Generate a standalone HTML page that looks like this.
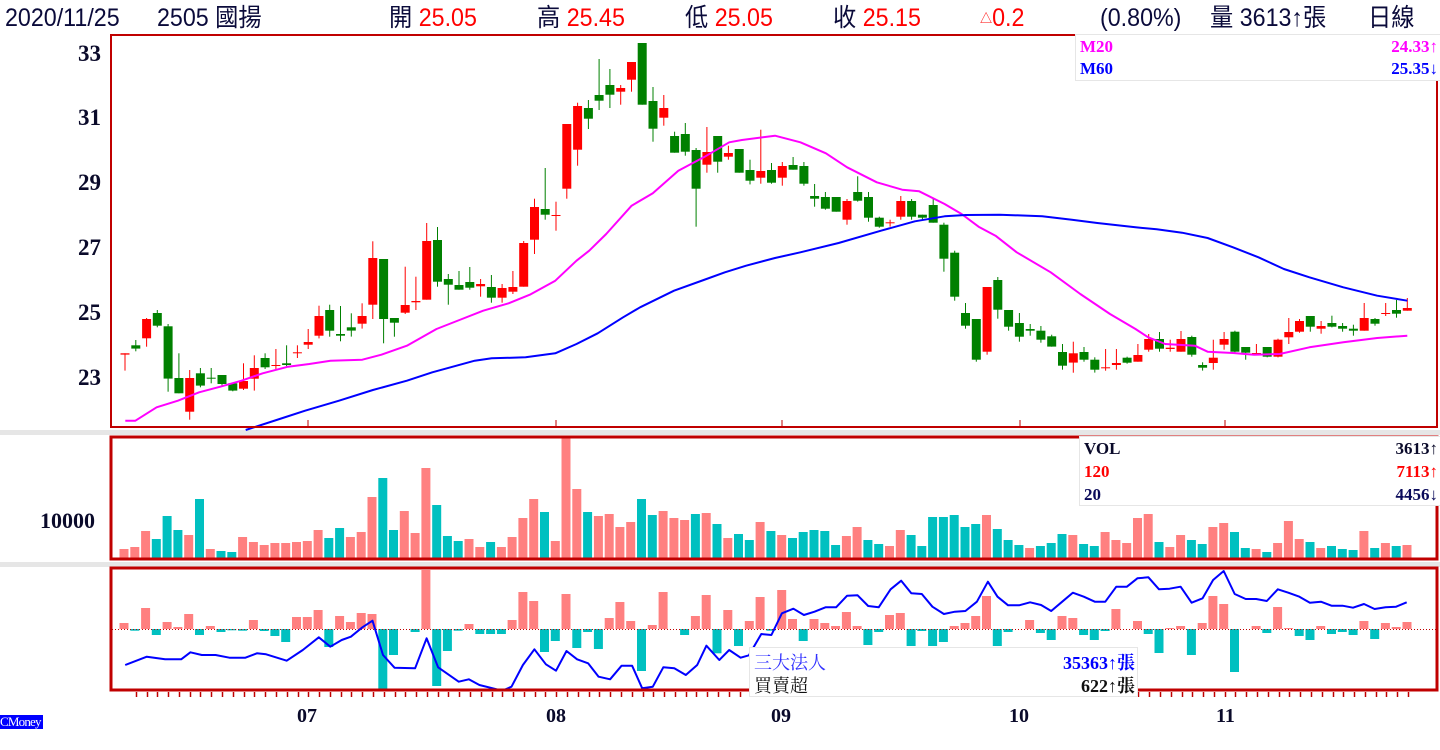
<!DOCTYPE html>
<html><head><meta charset="utf-8">
<style>
html,body{margin:0;padding:0;background:#fff;width:1440px;height:750px;overflow:hidden;position:relative}
.h{position:absolute;top:3px;font-family:"Liberation Sans","Noto Sans CJK TC",sans-serif;font-size:25px;color:#0a0a3a;white-space:nowrap;transform:scaleX(0.93);transform-origin:left top;line-height:30px}
.r{color:#ff0000}
.ax{position:absolute;font-family:"Liberation Serif",serif;font-weight:bold;color:#0a0a2a;white-space:nowrap}
.lg{position:absolute;background:#fff;border:1px solid #e6e6e6;font-family:"Liberation Serif","Noto Serif CJK SC",serif;font-weight:bold;font-size:17px}
.lg div{position:absolute;white-space:nowrap}
</style></head><body>
<div class="h" style="left:5px">2020/11/25</div>
<div class="h" style="left:157px">2505 國揚</div>
<div class="h" style="left:389px">開 <span class="r">25.05</span></div>
<div class="h" style="left:537px">高 <span class="r">25.45</span></div>
<div class="h" style="left:685px">低 <span class="r">25.05</span></div>
<div class="h" style="left:833px">收 <span class="r">25.15</span></div>
<div class="h" style="left:980px"><span class="r"><span style="font-size:13px;vertical-align:3px">△</span>0.2</span></div>
<div class="h" style="left:1100px">(0.80%)</div>
<div class="h" style="left:1210px">量 3613↑張</div>
<div class="h" style="left:1368px">日線</div>

<svg id="c" width="1440" height="750" style="position:absolute;left:0;top:0"></svg>

<div class="ax" style="left:78px;top:41px;font-size:23px">33</div>
<div class="ax" style="left:78px;top:105px;font-size:23px">31</div>
<div class="ax" style="left:78px;top:170px;font-size:23px">29</div>
<div class="ax" style="left:78px;top:235px;font-size:23px">27</div>
<div class="ax" style="left:78px;top:300px;font-size:23px">25</div>
<div class="ax" style="left:78px;top:365px;font-size:23px">23</div>
<div class="ax" style="left:40px;top:508px;font-size:22px">10000</div>
<div class="ax" style="left:297px;top:705px;font-size:20px">07</div>
<div class="ax" style="left:546px;top:705px;font-size:20px">08</div>
<div class="ax" style="left:771px;top:705px;font-size:20px">09</div>
<div class="ax" style="left:1009px;top:705px;font-size:20px">10</div>
<div class="ax" style="left:1216px;top:705px;font-size:20px">11</div>
<div style="position:absolute;left:0;top:715px;width:43px;height:14px;background:#0000ff;color:#fff;font-family:'Liberation Serif',serif;font-size:13px;line-height:14px;letter-spacing:-0.8px">CMoney</div>

<div class="lg" style="left:1075px;top:34px;width:364px;height:45px">
<div style="left:4px;top:2px;color:#ff00ff">M20</div><div style="right:2px;top:2px;color:#ff00ff">24.33↑</div>
<div style="left:4px;top:24px;color:#0000ff">M60</div><div style="right:2px;top:24px;color:#0000ff">25.35↓</div>
</div>
<div class="lg" style="left:1079px;top:436px;width:360px;height:68px">
<div style="left:4px;top:2px;color:#0a0a2a">VOL</div><div style="right:2px;top:2px;color:#0a0a2a">3613↑</div>
<div style="left:4px;top:25px;color:#ff0000">120</div><div style="right:2px;top:25px;color:#ff0000">7113↑</div>
<div style="left:4px;top:48px;color:#0a0a5a">20</div><div style="right:2px;top:48px;color:#0a0a5a">4456↓</div>
</div>
<div class="lg" style="left:749px;top:647px;width:387px;height:48px;font-weight:normal;font-size:18px">
<div style="left:4px;top:1px;color:#3030ff">三大法人</div><div style="right:2px;top:1px;color:#0000ff;font-weight:bold">35363↑張</div>
<div style="left:4px;top:24px;color:#111">買賣超</div><div style="right:2px;top:24px;color:#111;font-weight:bold">622↑張</div>
</div>

<script>
var s='';
function R(x,y,w,h,c){s+='<rect x="'+x.toFixed(1)+'" y="'+y.toFixed(1)+'" width="'+w+'" height="'+Math.max(h,1).toFixed(1)+'" fill="'+c+'"/>';}
R(0,430,1440,5,'#e6e6e6');R(0,562,1440,5,'#e6e6e6');
var C=[[958,962,958,1010,1],[934,944,918,952,0],[855,913,852,938,1],[837,875,828,880,0],[877,1034,870,1073,0],[1032,1078,958,1078,0],[1032,1133,1008,1157,1],[1018,1055,1002,1060,0],[1031,1034,1002,1048,0],[1023,1050,1023,1055,0],[1048,1070,1048,1072,0],[1041,1064,988,1068,1],[1002,1034,964,1070,1],[972,1000,958,1005,0],[993,996,945,1005,1],[988,993,934,997,0],[955,956,934,972,1],[924,932,885,945,1],[846,905,815,913,1],[828,890,812,908,0],[900,905,816,922,0],[880,890,838,908,0],[846,869,808,884,1],[672,812,622,855,1],[675,855,675,928,0],[852,866,852,908,0],[813,836,698,840,1],[801,805,728,828,1],[621,797,567,797,1],[618,743,579,758,0],[735,752,720,812,0],[753,767,711,767,0],[744,761,699,767,0],[750,757,735,788,1],[759,791,723,806,0],[762,791,750,806,1],[759,773,711,780,1],[627,758,621,758,1],[519,617,494,660,1],[525,542,402,557,0],[543,545,503,590,1],[270,464,270,494,1],[216,347,206,395,1],[222,254,198,285,0],[183,200,75,228,0],[153,182,105,222,0],[162,173,153,212,1],[84,137,84,173,1],[27,212,27,212,0],[201,284,159,323,0],[222,251,183,275,1],[306,356,293,356,0],[300,353,267,365,0],[348,464,342,578,0],[354,392,279,416,1],[306,383,306,416,0],[357,368,335,377,1],[345,416,345,416,0],[408,440,377,451,0],[411,431,287,449,1],[408,446,387,449,0],
[396,431,384,455,1],[393,407,369,407,0],[396,449,384,455,0],[486,494,450,518,0],[489,524,474,527,0],[489,533,489,533,0],[501,557,495,572,1],[474,500,427,503,0],[489,551,474,563,0],[551,578,548,581,0],[565,567,557,578,1],[501,548,486,557,1],[501,548,495,557,0],[542,551,542,557,0],[513,566,492,566,0],[572,674,566,713,0],[656,788,650,800,0],[837,875,807,884,0],[855,977,855,983,0],[759,953,759,962,1],[738,827,729,854,0],[828,878,828,890,0],[867,908,837,923,0],[885,890,870,905,0],[890,917,876,926,0],[907,938,902,938,0],[954,995,930,1007,0],[958,986,923,1016,1],[954,977,939,983,0],[977,1007,970,1016,0],[1000,1003,945,1010,1],[987,993,945,1007,1],[971,986,968,989,0],[963,983,930,983,1],[915,947,900,953,1],[915,944,894,953,0],[941,945,917,953,1],[915,953,891,953,1],[909,962,905,968,0],[993,1001,985,1010,0],[971,987,917,1007,1],[915,932,894,947,1],[893,953,890,956,0],[939,956,939,977,0],[957,961,930,962,1],[939,968,939,970,0],[917,968,914,970,1],[894,910,852,930,1],[861,893,855,896,1],[846,878,846,893,0],[876,884,861,899,1],[867,878,845,880,0],[876,884,867,893,0],[884,890,872,905,0],[852,890,807,890,1],[855,869,852,875,0],[837,840,807,846,1],[828,839,798,851,0],[822,830,792,830,1]];
var N=C.length;
function cx(i){return 125+i*(1407.3-125)/(N-1);}
for(var i=0;i<N;i++){var c=C[i],x=cx(i),col=c[4]?'#ff0000':'#008000';
R(x-0.5,34+c[2]/3,1,(c[3]-c[2])/3,col);R(x-4.5,34+c[0]/3,9,(c[1]-c[0])/3,col);}
function line(pts,col,w){s+='<polyline fill="none" stroke="'+col+'" stroke-width="'+w+'" stroke-linejoin="round" points="'+pts.map(function(p){return p[0].toFixed(1)+','+p[1].toFixed(1)}).join(' ')+'"/>';}
function z5(a){return a.map(function(p){return[110+p[0]/2.358,34+p[1]/3]});}
function z6(a){return a.map(function(p){return[775+p[0]/2.358,34+p[1]/3]});}
var m20=z5([[36,1160],[60,1160],[110,1120],[160,1100],[210,1075],[260,1058],[310,1040],[360,1018],[420,998],[470,990],[520,980],[595,977],[640,962],[700,935],[770,885],[830,855],[880,830],[940,808],[990,782],[1050,740],[1100,680],[1130,650],[1170,600],[1230,515],[1280,478],[1340,410],[1400,370],[1460,325],[1490,318],[1568,305]]).concat(z6([[60,325],[120,358],[170,400],[240,445],[300,467],[340,472],[400,510],[440,540],[480,578],[520,605],[570,655],[650,715],[720,780],[790,840],[850,885],[880,910],[920,930],[990,935],[1020,953],[1080,957],[1130,962],[1190,960],[1260,940],[1340,925],[1420,912],[1491,905]]));
var m60=z5([[320,1188],[400,1155],[460,1130],[540,1100],[620,1068],[700,1040],[760,1015],[860,980],[900,973],[980,970],[1050,958],[1100,930],[1150,898],[1210,850],[1250,820],[1330,770],[1400,738],[1450,715],[1500,695],[1568,672]]).concat(z6([[60,655],[150,627],[250,590],[330,562],[400,547],[450,543],[530,542],[630,547],[700,557],[760,567],[850,580],[900,586],[960,596],[1020,612],[1080,640],[1140,670],[1200,705],[1260,730],[1340,760],[1420,785],[1491,800]]));
line(m20,'#ff00ff',2);line(m60,'#0000ff',2);
var V=[[387,1],[381,1],[333,1],[357,0],[288,0],[330,0],[345,1],[237,0],[387,1],[393,0],[396,0],[351,1],[366,1],[375,1],[369,1],[369,1],[366,1],[363,1],[330,1],[354,0],[324,0],[351,1],[336,1],[231,1],[174,0],[330,0],[273,1],[339,1],[144,1],[255,0],[348,0],[363,0],[357,1],[381,1],[366,0],[381,1],[351,1],[294,1],[237,1],[276,0],[363,1],[54,1],[207,1],[276,0],[288,1],[282,1],[321,1],[306,1],[237,0],[285,0],[273,1],[294,1],[300,1],[282,0],[279,1],[312,0],
[354,1],[342,0],[360,0],[306,1],[333,0],[345,1],[354,0],[336,0],[330,0],[333,0],[375,0],[348,1],[321,1],[360,0],[372,0],[378,1],[330,1],[345,0],[378,0],[291,0],[291,0],[285,0],[321,0],[312,0],[285,1],[327,0],[360,0],[375,0],[384,1],[378,0],[369,0],[342,0],[345,1],[372,0],[378,0],[336,1],[360,1],[369,1],[294,1],[282,1],[366,0],[381,1],[345,1],[360,0],[372,0],[321,1],[309,1],[336,0],[384,0],[387,1],[396,0],[369,1],[303,1],[357,1],[366,0],[384,1],[378,0],[387,0],[390,0],[333,1],[384,0],[369,1],[378,0],[375,1]];
var M=V.length;function vx(i){return 124+i*(1407-124)/(M-1);}
for(var i=0;i<M;i++){var t=420+V[i][0]/3;R(vx(i)-4.5,t,9,558-t,V[i][1]?'#ff8080':'#00c0c0');}
var B=[609,632,564,645,606,621,582,645,618,636,631,632,600,633,648,666,591,591,570,681,588,606,579,582,815,705,628,636,450,798,693,632,612,642,642,642,600,516,543,696,663,522,684,636,687,594,546,603,753,615,516,628,645,588,525,700,
570,678,603,531,632,510,597,663,597,609,618,576,618,675,636,585,579,678,633,678,666,618,609,588,528,678,636,627,600,639,660,588,594,645,660,633,567,627,603,642,699,624,618,705,609,528,552,756,627,618,639,561,624,648,660,618,642,636,645,603,657,609,621,606];
for(var i=0;i<B.length&&i<M;i++){var y=420+B[i]/3,b=629;if(Math.abs(y-b)<0.5)continue;
if(y<b)R(vx(i)-4.5,y,9,b-y,'#ff8080');else R(vx(i)-4.5,b,9,Math.min(y,691)-b,'#00c0c0');}
s+='<line x1="112" y1="629.5" x2="1437" y2="629.5" stroke="#c00000" stroke-width="1" stroke-dasharray="1,2"/>';
function z3(a){return a.map(function(p){return[p[0]/2.18,420+p[1]/3]});}
function z4(a){return a.map(function(p){return[720+p[0]/2.18,420+p[1]/3]});}
var bl=z3([[273,735],[320,710],[360,718],[395,718],[415,697],[440,705],[470,705],[500,713],[535,713],[560,700],[580,703],[625,722],[660,690],[695,652],[720,680],[745,660],[765,650],[790,622],[812,602],[835,705],[860,743],[905,745],[930,655],[955,742],[1000,785],[1022,778],[1045,795],[1095,812],[1115,800],[1140,735],[1165,688],[1190,733],[1212,752],[1235,693],[1258,718],[1282,730],[1305,770],[1330,778],[1355,737],[1378,737],[1400,805],[1423,800],[1446,742],[1470,745],[1495,765],[1520,735],[1540,677],[1568,720]]).concat(z4([[0,718],[20,690],[45,713],[63,706],[90,642],[112,645],[135,580],[160,566],[183,585],[206,575],[230,562],[253,562],[277,527],[300,526],[323,558],[346,562],[372,508],[395,482],[417,520],[440,522],[463,560],[488,582],[512,575],[535,573],[560,545],[584,485],[605,530],[628,556],[652,556],[676,547],[700,555],[722,573],[746,545],[769,518],[793,530],[817,545],[840,545],[864,500],[887,500],[910,475],[934,472],[957,508],[980,506],[1004,500],[1028,548],[1052,535],[1075,480],[1098,453],[1122,522],[1146,537],[1169,537],[1192,543],[1216,508],[1239,518],[1263,530],[1286,548],[1310,545],[1333,557],[1357,557],[1380,563],[1404,552],[1427,567],[1451,562],[1474,560],[1497,547]]));
line(bl,'#0000ff',2);
var rc='#c00000';
s+='<rect x="111" y="35" width="1326" height="392" fill="none" stroke="'+rc+'" stroke-width="2"/>';
s+='<rect x="111" y="437" width="1326" height="122" fill="none" stroke="'+rc+'" stroke-width="3"/>';
s+='<rect x="111" y="568" width="1326" height="122" fill="none" stroke="'+rc+'" stroke-width="3"/>';
[308,556,782,1020,1225].forEach(function(x){s+='<line x1="'+x+'" y1="420" x2="'+x+'" y2="427" stroke="'+rc+'"/>';});
for(var i=1;i<M;i++){var x=Math.round(vx(i))+1.5;s+='<line x1="'+x+'" y1="692" x2="'+x+'" y2="697" stroke="'+rc+'" stroke-width="1.5"/>';}
document.getElementById('c').innerHTML=s;
</script>
</body></html>
